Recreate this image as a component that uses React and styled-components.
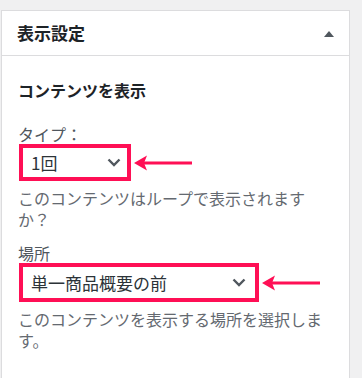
import React from "react";
import styled, { createGlobalStyle } from "styled-components";

const Global = createGlobalStyle`
  html, body { margin: 0; padding: 0; background: #f0f0f1; }
  body { font-family: "Noto Sans CJK JP", "Noto Sans", sans-serif; }
`;

const Panel = styled.section`
  margin: 10px 0 0 1px;
  width: 349px;
  box-sizing: border-box;
  background: #fff;
  border: 1px solid #dcdcde;
`;

const Header = styled.div`
  height: 44px;
  display: flex;
  align-items: center;
  justify-content: space-between;
  padding: 0 15px 0 15px;
  border-bottom: 1px solid #dcdcde;
`;

const Title = styled.h2`
  margin: 0;
  font-size: 17px;
  font-weight: 700;
  color: #1d2327;
  line-height: 24px;
`;

const Toggle = styled.svg`
  width: 10px;
  height: 6px;
  margin-top: 2px;
`;

const Body = styled.div`
  padding: 22px 15px 27px 16px;
  display: flex;
  flex-direction: column;
`;

const Heading = styled.h3`
  margin: 0 0 22px;
  font-size: 16px;
  font-weight: 700;
  line-height: 24px;
  color: #1d2327;
`;

const Label = styled.div`
  font-size: 16px;
  line-height: 20px;
  color: #50575e;
  margin-top: ${(p) => p.$mt || 0}px;
`;

const Row = styled.div`
  display: flex;
  align-items: center;
  gap: 3px;
`;

const SelectBox = styled.div`
  position: relative;
  box-sizing: border-box;
  width: ${(p) => p.$w}px;
  height: ${(p) => p.$h}px;
  margin-left: 1px;
  display: flex;
  align-items: center;
  justify-content: space-between;
  padding: 0 ${(p) => p.$pr}px 0 11px;
  border: 1px solid #8c8f94;
  font-size: 17px;
  color: #2c3338;
`;

const Highlight = styled.span`
  position: absolute;
  inset: -1px;
  border: 4px solid #ff0f55;
  pointer-events: none;
`;

const Help = styled.p`
  margin: 7px 0 0;
  font-size: 16px;
  line-height: 21px;
  color: #646970;
`;

const Chevron = () => (
  <svg width="14" height="9" viewBox="0 0 14 9">
    <path d="M1.5 1.5 L7 7 L12.5 1.5" fill="none" stroke="#50575e" strokeWidth="2.4" />
  </svg>
);

const Arrow = () => (
  <svg width="58" height="16" viewBox="0 0 58 16">
    <path d="M0 8 L13 0.5 L10 8 L13 15.5 Z" fill="#ff0f55" />
    <rect x="10" y="6.5" width="48" height="3" fill="#ff0f55" />
  </svg>
);

export default function App() {
  return (
    <>
      <Global />
      <Panel>
        <Header>
          <Title>表示設定</Title>
          <Toggle viewBox="0 0 10 6">
            <path d="M0 6 L5 0 L10 6 Z" fill="#50575e" />
          </Toggle>
        </Header>
        <Body>
          <Heading>コンテンツを表示</Heading>
          <Label>タイプ：</Label>
          <Row>
            <SelectBox $w={112} $h={37} $pr={9}>
              1回
              <Chevron />
              <Highlight />
            </SelectBox>
            <Arrow />
          </Row>
          <Help>このコンテンツはループで表示されますか？</Help>
          <Label $mt={13}>場所</Label>
          <Row>
            <SelectBox $w={240} $h={39} $pr={12}>
              単一商品概要の前
              <Chevron />
              <Highlight />
            </SelectBox>
            <Arrow />
          </Row>
          <Help>このコンテンツを表示する場所を選択します。</Help>
        </Body>
      </Panel>
    </>
  );
}
